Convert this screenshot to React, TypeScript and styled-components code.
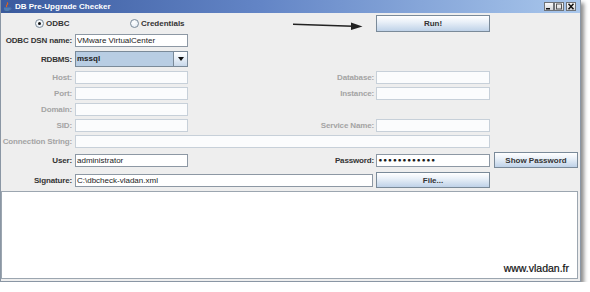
import React from 'react'
import styled, { createGlobalStyle, css } from 'styled-components'

const GlobalStyle = createGlobalStyle`
  html, body {
    margin: 0;
    padding: 0;
    background: #ffffff;
  }
  body {
    font-family: 'Liberation Sans', Arial, sans-serif;
  }
`

const cols = '74px 113px 188px 114px 88px'

const Window = styled.div`
  width: 581px;
  height: 282px;
  box-sizing: border-box;
  border: 1px solid #8a96a4;
  border-top: 0;
  background: #eeeeee;
  box-shadow: 3px 3px 4px rgba(0, 0, 0, 0.45);
  display: flex;
  flex-direction: column;
`

const TitleBar = styled.div`
  height: 13px;
  display: flex;
  align-items: center;
  padding: 0 4px 0 2px;
  background: linear-gradient(to right, #3a5a9e 0%, #6385c6 45%, #a9c7ec 100%);
`

const TitleText = styled.span`
  flex: 1;
  margin-left: 3px;
  font-size: 8px;
  font-weight: bold;
  color: #ffffff;
  line-height: 13px;
  white-space: nowrap;
`

const WinButtons = styled.div`
  display: flex;
  align-items: center;
`

const WinButton = styled.span<{ $gap?: number }>`
  width: 10px;
  height: 9px;
  box-sizing: border-box;
  margin-left: ${(p) => p.$gap ?? 0}px;
  border: 1px solid #6f7378;
  background: linear-gradient(to bottom, #fafafa, #d2d4d8);
  display: flex;
  align-items: center;
  justify-content: center;
`

const Body = styled.div`
  flex: 1;
  display: flex;
  flex-direction: column;
  padding-top: 2px;
`

const Row = styled.div<{ $h: number; $mt?: number }>`
  display: grid;
  grid-template-columns: ${cols};
  align-items: center;
  height: ${(p) => p.$h}px;
  margin-top: ${(p) => p.$mt ?? 3}px;
`

const Label = styled.span<{ $off?: boolean; $col?: number }>`
  grid-column: ${(p) => p.$col ?? 1};
  display: flex;
  justify-content: flex-end;
  padding-right: ${(p) => (p.$col === 3 ? 2 : 3)}px;
  font-size: 8px;
  font-weight: bold;
  letter-spacing: -0.15px;
  line-height: 13px;
  white-space: nowrap;
  color: ${(p) => (p.$off ? '#a4a4a4' : '#333333')};
`

const Field = styled.input<{ $off?: boolean; $col?: string; $end?: boolean }>`
  grid-column: ${(p) => p.$col ?? '2'};
  height: 13px;
  width: auto;
  min-width: 0;
  box-sizing: border-box;
  margin: 0;
  padding: 0 1px;
  border: 1px solid ${(p) => (p.$off ? '#c7d0d9' : '#8d98a4')};
  border-radius: 0;
  background: ${(p) => (p.$off ? '#fbfcfd' : '#ffffff')};
  font-family: 'Liberation Sans', Arial, sans-serif;
  font-size: 8px;
  color: #222222;
  outline: none;
  ${(p) =>
    p.$end &&
    css`
      align-self: end;
      margin: 0 3px 1px 0;
    `}
`

const Secret = styled(Field)`
  font-family: 'DejaVu Sans', sans-serif;
  font-size: 7.5px;
  font-weight: bold;
  letter-spacing: 0;
  color: #1a1a1a;
`

const Combo = styled.div`
  grid-column: 2;
  height: 16px;
  box-sizing: border-box;
  display: flex;
  border: 1px solid #7a8a99;
  background: #b8cde3;
`

const ComboText = styled.span`
  flex: 1;
  padding-left: 1px;
  font-size: 8px;
  font-weight: bold;
  line-height: 14px;
  color: #222222;
`

const ComboArrow = styled.span`
  width: 13px;
  border-left: 1px solid #7a8a99;
  background: linear-gradient(to bottom, #ffffff, #e6eef7 50%, #c8d8ea);
  display: flex;
  align-items: center;
  justify-content: center;
  &::after {
    content: '';
    border-left: 3.5px solid transparent;
    border-right: 3.5px solid transparent;
    border-top: 4px solid #111111;
  }
`

const Button = styled.button<{ $col: number; $h: number; $ml?: number }>`
  grid-column: ${(p) => p.$col};
  height: ${(p) => p.$h}px;
  margin: 0 0 0 ${(p) => p.$ml ?? 0}px;
  padding: 0;
  box-sizing: border-box;
  border: 1px solid #7a8a99;
  border-radius: 0;
  background: linear-gradient(to bottom, #ffffff 0%, #e9f0f8 40%, #bfd2e8 100%);
  font-family: 'Liberation Sans', Arial, sans-serif;
  font-size: 8px;
  font-weight: bold;
  color: #333333;
`

const Radio = styled.label<{ $col: number; $pad: number }>`
  grid-column: ${(p) => p.$col};
  display: flex;
  align-items: center;
  gap: 2px;
  padding-left: ${(p) => p.$pad}px;
  font-size: 8px;
  font-weight: bold;
  color: #333333;
  white-space: nowrap;
`

const RadioDot = styled.span<{ $on?: boolean }>`
  width: 9px;
  height: 9px;
  box-sizing: border-box;
  border-radius: 50%;
  border: 1px solid #7a8a99;
  background: radial-gradient(circle at 40% 35%, #ffffff, #dfe8f2);
  display: flex;
  align-items: center;
  justify-content: center;
  ${(p) =>
    p.$on &&
    css`
      &::after {
        content: '';
        width: 3px;
        height: 3px;
        border-radius: 50%;
        background: #111111;
      }
    `}
`

const Pointer = styled.svg`
  grid-column: 3;
  margin-left: 105px;
`

const Output = styled.div`
  flex: 1;
  margin: 3px 2px 2px 0;
  background: #ffffff;
  border: 1px solid #9ca6b0;
  display: flex;
  align-items: flex-end;
  justify-content: flex-end;
  padding: 0 8px 4px 0;
`

const Credit = styled.span`
  font-size: 10.5px;
  line-height: 11px;
  color: #111111;
  -webkit-text-stroke: 0.2px #111111;
`

const CupIcon = () => (
  <svg width='9' height='10' viewBox='0 0 9 10'>
    <path d='M4 0.5 q1.4 1.2 0 2.4 q-1.2 1 0 2.2' stroke='#e0621c' strokeWidth='1.1' fill='none' />
    <path d='M1 5.5 h6 v1.6 a2 2 0 0 1 -2 2 h-2 a2 2 0 0 1 -2 -2 z' fill='#4f7db3' />
    <path d='M7 6 h1 v1.2 h-1' stroke='#4f7db3' strokeWidth='0.9' fill='none' />
    <rect x='0.5' y='9.3' width='8' height='0.7' fill='#3b5f8c' />
  </svg>
)

const App = () => (
  <>
    <GlobalStyle />
    <Window>
      <TitleBar>
        <CupIcon />
        <TitleText>DB Pre-Upgrade Checker</TitleText>
        <WinButtons>
          <WinButton>
            <svg width='8' height='7' viewBox='0 0 8 7'>
              <rect x='1' y='5' width='4' height='1.5' fill='#111' />
            </svg>
          </WinButton>
          <WinButton>
            <svg width='8' height='7' viewBox='0 0 8 7'>
              <rect x='1.5' y='1' width='5' height='5' fill='none' stroke='#555' strokeWidth='1' />
            </svg>
          </WinButton>
          <WinButton $gap={2}>
            <svg width='8' height='7' viewBox='0 0 8 7'>
              <path d='M1.5 0.8 L6.5 6.2 M6.5 0.8 L1.5 6.2' stroke='#111' strokeWidth='1.5' />
            </svg>
          </WinButton>
        </WinButtons>
      </TitleBar>

      <Body>
        <Row $h={17} $mt={0}>
          <Radio $col={1} $pad={34}>
            <RadioDot $on />
            ODBC
          </Radio>
          <Radio $col={2} $pad={55}>
            <RadioDot />
            Credentials
          </Radio>
          <Pointer width='70' height='17' viewBox='0 0 70 17'>
            <path d='M0 9.2 L60 11.2' stroke='#222' strokeWidth='1.5' />
            <polygon points='58,7.6 69.5,11.6 58,15' fill='#222' />
          </Pointer>
          <Button $col={4} $h={17}>
            Run!
          </Button>
        </Row>

        <Row $h={13} $mt={2}>
          <Label>ODBC DSN name:</Label>
          <Field readOnly defaultValue='VMware VirtualCenter' />
        </Row>

        <Row $h={16} $mt={4}>
          <Label>RDBMS:</Label>
          <Combo>
            <ComboText>mssql</ComboText>
            <ComboArrow />
          </Combo>
        </Row>

        <Row $h={13} $mt={4}>
          <Label $off>Host:</Label>
          <Field $off readOnly />
          <Label $off $col={3}>
            Database:
          </Label>
          <Field $off $col='4' readOnly />
        </Row>

        <Row $h={13}>
          <Label $off>Port:</Label>
          <Field $off readOnly />
          <Label $off $col={3}>
            Instance:
          </Label>
          <Field $off $col='4' readOnly />
        </Row>

        <Row $h={13}>
          <Label $off>Domain:</Label>
          <Field $off readOnly />
        </Row>

        <Row $h={13}>
          <Label $off>SID:</Label>
          <Field $off readOnly />
          <Label $off $col={3}>
            Service Name:
          </Label>
          <Field $off $col='4' readOnly />
        </Row>

        <Row $h={13}>
          <Label $off>Connection String:</Label>
          <Field $off $col='2 / 5' readOnly />
        </Row>

        <Row $h={16} $mt={4}>
          <Label>User:</Label>
          <Field readOnly defaultValue='administrator' />
          <Label $col={3}>Password:</Label>
          <Secret $col='4' readOnly defaultValue={'\u2022'.repeat(12)} />
          <Button $col={5} $h={16} $ml={4}>
            Show Password
          </Button>
        </Row>

        <Row $h={16} $mt={4}>
          <Label>Signature:</Label>
          <Field $col='2 / 4' $end readOnly defaultValue='C:\dbcheck-vladan.xml' />
          <Button $col={4} $h={16}>
            File...
          </Button>
        </Row>

        <Output>
          <Credit>www.vladan.fr</Credit>
        </Output>
      </Body>
    </Window>
  </>
)

export default App
